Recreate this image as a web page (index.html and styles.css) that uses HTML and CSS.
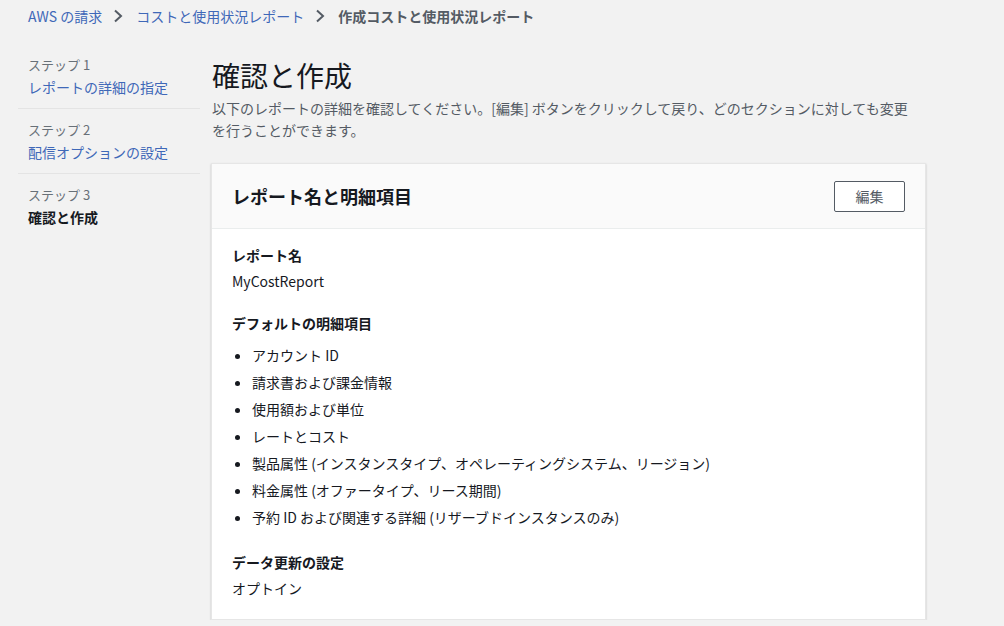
FILE: index.html
```html
<!DOCTYPE html>
<html lang="ja">
<head>
    <meta charset="UTF-8">
    <meta name="viewport" content="width=device-width, initial-scale=1.0">
    <title>確認と作成</title>
    <link rel="stylesheet" href="styles.css">
</head>
<body>

<nav class="breadcrumb">
    <a href="#">AWS の請求</a>
    <svg class="chevron" width="10" height="14" viewBox="0 0 10 14"><path d="M2 1.5 L8 7 L2 12.5" fill="none" stroke="#545b64" stroke-width="2"/></svg>
    <a href="#">コストと使用状況レポート</a>
    <svg class="chevron" width="10" height="14" viewBox="0 0 10 14"><path d="M2 1.5 L8 7 L2 12.5" fill="none" stroke="#545b64" stroke-width="2"/></svg>
    <span class="current">作成コストと使用状況レポート</span>
</nav>

<div class="layout">
    <!-- Wizard steps -->
    <ul class="steps">
        <li class="step">
            <span class="step-num">ステップ 1</span>
            <a href="#" class="step-title">レポートの詳細の指定</a>
        </li>
        <li class="step">
            <span class="step-num">ステップ 2</span>
            <a href="#" class="step-title">配信オプションの設定</a>
        </li>
        <li class="step">
            <span class="step-num">ステップ 3</span>
            <span class="step-title active">確認と作成</span>
        </li>
    </ul>

    <main class="content">
        <h1>確認と作成</h1>
        <p class="intro">以下のレポートの詳細を確認してください。[編集] ボタンをクリックして戻り、どのセクションに対しても変更を行うことができます。</p>

        <section class="card">
            <div class="card-header">
                <h2>レポート名と明細項目</h2>
                <button class="btn">編集</button>
            </div>
            <div class="card-body">
                <div class="field">
                    <div class="label">レポート名</div>
                    <div class="value">MyCostReport</div>
                </div>
                <div class="field">
                    <div class="label">デフォルトの明細項目</div>
                    <ul class="items">
                        <li>アカウント ID</li>
                        <li>請求書および課金情報</li>
                        <li>使用額および単位</li>
                        <li>レートとコスト</li>
                        <li>製品属性 (インスタンスタイプ、オペレーティングシステム、リージョン)</li>
                        <li>料金属性 (オファータイプ、リース期間)</li>
                        <li>予約 ID および関連する詳細 (リザーブドインスタンスのみ)</li>
                    </ul>
                </div>
                <div class="field">
                    <div class="label">データ更新の設定</div>
                    <div class="value">オプトイン</div>
                </div>
            </div>
        </section>
    </main>
</div>

</body>
</html>
```

FILE: styles.css
```css
body {
    font-family: "Noto Sans CJK JP", "Noto Sans", sans-serif;
    font-size: 14px;
    line-height: 22px;
    color: #16191f;
    background-color: #f2f2f2;
    margin: 0;
    padding: 0;
}
a {
    color: #3f68b8;
    text-decoration: none;
}
.breadcrumb {
    display: flex;
    align-items: center;
    height: 32px;
    padding-left: 28px;
}
.chevron {
    margin: 0 13px 0 11px;
}
.breadcrumb .current {
    color: #545b64;
    font-weight: bold;
}
.layout {
    display: flex;
    gap: 11px;
    padding-left: 18px;
    padding-top: 12px;
}
.steps {
    list-style: none;
    margin: 0;
    padding: 0;
    width: 182px;
}
.step {
    display: flex;
    flex-direction: column;
    padding: 10px 0 10px 10px;
    border-bottom: 1px solid #e4e4e4;
    height: 44px;
}
.step:last-child {
    border-bottom: none;
}
.step-num {
    font-size: 13px;
    line-height: 22px;
    color: #687078;
}
.step-title.active {
    font-weight: bold;
    color: #16191f;
}
.content {
    width: 715px;
}
h1 {
    font-size: 28px;
    font-weight: normal;
    line-height: 34px;
    margin: 14px 0 5px 1px;
}
.intro {
    color: #545b64;
    margin: 0 0 22px 1px;
    padding-right: 10px;
}
.card {
    background-color: #fff;
    border: 1px solid #e6e6e6;
    box-shadow: 0 1px 2px rgba(0, 0, 0, 0.2);
}
.card-header {
    display: flex;
    align-items: center;
    justify-content: space-between;
    height: 64px;
    padding: 0 20px;
    background-color: #fafafa;
    border-bottom: 1px solid #eaeded;
}
.card-header h2 {
    margin: 0;
    font-size: 18px;
    font-weight: bold;
}
.btn {
    font-family: inherit;
    font-size: 14px;
    color: #545b64;
    background-color: #fff;
    border: 1px solid #545b64;
    border-radius: 2px;
    width: 71px;
    height: 31px;
    padding: 0;
    cursor: pointer;
}
.card-body {
    padding: 15px 20px 20px 20px;
}
.field + .field {
    margin-top: 20px;
}
.label {
    font-weight: bold;
    margin-bottom: 4px;
}
.items {
    margin: 8px 0 0 0;
    padding-left: 20px;
}
.items li {
    line-height: 27px;
}
```
